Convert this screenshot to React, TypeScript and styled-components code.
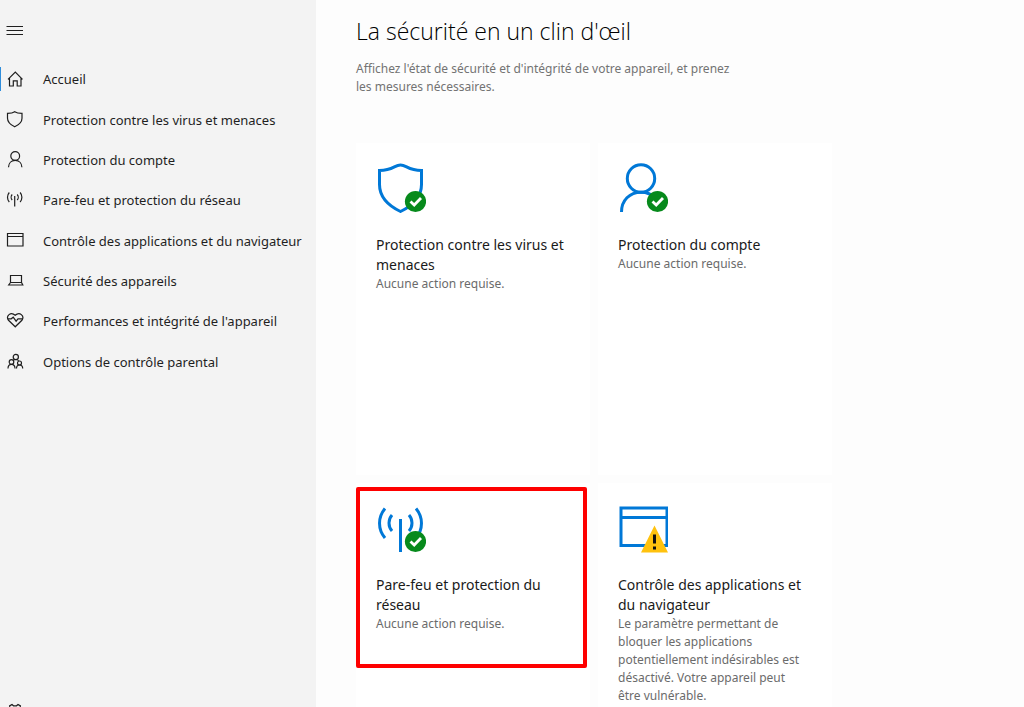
import React from "react";
import styled, { createGlobalStyle } from "styled-components";

const GlobalStyle = createGlobalStyle`
  *, *::before, *::after { box-sizing: border-box; }
  body {
    margin: 0;
    background: #fdfdfd;
    color: #1a1a1a;
    font-family: "Segoe UI", "Noto Sans", "Open Sans", sans-serif;
  }
`;

const Shell = styled.div`
  display: grid;
  grid-template-columns: minmax(316px, 24%) 1fr;
  height: 100vh;
  overflow: hidden;
`;

const Sidebar = styled.aside`
  display: flex;
  flex-direction: column;
  background: #f3f3f3;
  overflow: hidden;
`;

const IconButton = styled.button`
  display: flex;
  align-items: center;
  flex: none;
  height: 59px;
  padding: 0 6px;
  border: 0;
  background: none;
  color: #1f1f1f;
`;

const Nav = styled.nav`
  display: grid;
  grid-auto-rows: 1fr;
  min-height: 323px;
`;

const NavLink = styled.a<{ $active?: boolean }>`
  display: flex;
  align-items: center;
  gap: 19px;
  padding-left: 6px;
  color: #1f1f1f;
  font-size: 13px;
  line-height: 20px;
  text-decoration: none;
  white-space: nowrap;
  background: ${({ $active }) =>
    $active ? "linear-gradient(#2f8ddb, #2f8ddb) left center / 1px 24px no-repeat" : "none"};
`;

const SidebarFooter = styled.div`
  margin-top: auto;
  margin-bottom: -34px;
`;

const Main = styled.main`
  padding: 15px 40px 40px;
  overflow: hidden;
`;

const PageTitle = styled.h1`
  margin: 0;
  color: #000;
  font-family: "Segoe UI", "Open Sans", sans-serif;
  font-size: 23px;
  font-weight: 300;
  line-height: 32px;
`;

const Intro = styled.p`
  max-width: 388px;
  margin: 13px 0 47px;
  color: #737373;
  font-size: 12px;
  line-height: 18px;
`;

const Cards = styled.div`
  display: grid;
  grid-template-columns: repeat(auto-fill, 234px);
  grid-auto-rows: minmax(332px, auto);
  gap: 8px;
  max-width: 480px;
`;

const Card = styled.a`
  position: relative;
  display: block;
  padding: 20px 24px 20px 20px;
  background: #fff;
  color: inherit;
  text-decoration: none;
`;

const Highlight = styled.span`
  position: absolute;
  top: 4px;
  right: 3px;
  left: 0;
  height: 181px;
  border: 4px solid #fe0000;
  border-radius: 2px;
`;

const CardTitle = styled.h2`
  margin: 22px 0 0;
  color: #1a1a1a;
  font-size: 14px;
  font-weight: 400;
  line-height: 20px;
`;

const CardText = styled.p`
  margin: 0;
  color: #6b6b6b;
  font-size: 12px;
  line-height: 18px;
`;

const SmallSvg = styled.svg`
  display: block;
  flex: none;
  width: 18px;
  height: 18px;
  fill: none;
  stroke: currentColor;
  stroke-width: 1.2;
`;

const LargeSvg = styled.svg`
  display: block;
  width: 50px;
  height: 50px;
  fill: none;
  stroke: #0078d7;
  stroke-width: 3;
`;

const CheckBadge = () => (
  <g stroke="none">
    <circle cx="39.5" cy="38.5" r="10.6" fill="#078a1c" />
    <path d="M34.5 38.5l3.7 3.5 6.8-7" fill="none" stroke="#fff" strokeWidth="2.8" />
  </g>
);

const MenuIcon = () => (
  <SmallSvg viewBox="0 0 18 18" aria-hidden="true">
    <path d="M.5 5.500h16.500M.5 9.500h16.500M.5 13.500h16.500" />
  </SmallSvg>
);

const navIcons = {
  home: <path d="M2 9.300L9.300 2l7.200 7.300M3.500 8v8h3.800v-5.200h3.900V16H15V8" />,
  shield: (
    <path d="M8.700 .7C7 2 4.500 2.400 1.500 2.400V7.200c0 4.200 3 6.500 7.200 8.600C13 13.700 16 11.400 16 7.200V2.400c-3 0-5.500-.4-7.300-1.700z" />
  ),
  person: (
    <>
      <circle cx="9.200" cy="5" r="4.400" />
      <path d="M2.500 16.300c.1-4 2.800-6.900 6.700-6.900s6.600 2.900 6.700 6.900" />
    </>
  ),
  antenna: (
    <path d="M8.700 5v10.500M6.200 3.500c-1.400 1.500-1.400 4 0 5.500M11.200 3.500c1.400 1.500 1.400 4 0 5.500M3.300 1.500c-2.400 2.700-2.400 6.800 0 9.500M14.100 1.500c2.400 2.700 2.400 6.800 0 9.500" />
  ),
  browser: <path d="M1.500 1.500h15.500v12.500H1.500zM1.500 4.500h15.500" />,
  laptop: <path d="M4.500 3.500h11v7h-11zM4.500 10.500L2.700 13h14.100l-1.300-2.500" />,
  heart: (
    <>
      <path d="M9.200 14.800L2.500 8.300C-.5 4 4.700-.8 9.200 3.300c4.500-4.100 9.700.7 6.700 5z" />
      <path d="M1.800 6.800h3.400l2-1.600 2.900 4 1.900-2.400h4.800" />
    </>
  ),
  family: (
    <>
      <circle cx="9.800" cy="4" r="2.600" />
      <circle cx="5.500" cy="9" r="2.300" />
      <circle cx="13.500" cy="10" r="2" />
      <path d="M2 15.500c0-2.700 1.300-4.200 3.500-4.200S9 12.800 9 15.500M10.500 15.500c0-2.200 1-3.500 3-3.500s3.200 1.300 3.200 3.500M7 7.500c.7-.7 1.600-1 2.700-1 1.400 0 2.500.6 3.200 1.700" />
    </>
  ),
};

type NavIconName = keyof typeof navIcons;

const navItems: { icon: NavIconName; label: string }[] = [
  { icon: "home", label: "Accueil" },
  { icon: "shield", label: "Protection contre les virus et menaces" },
  { icon: "person", label: "Protection du compte" },
  { icon: "antenna", label: "Pare-feu et protection du réseau" },
  { icon: "browser", label: "Contrôle des applications et du navigateur" },
  { icon: "laptop", label: "Sécurité des appareils" },
  { icon: "heart", label: "Performances et intégrité de l'appareil" },
  { icon: "family", label: "Options de contrôle parental" },
];

const ShieldArt = () => (
  <LargeSvg viewBox="0 0 50 50" aria-hidden="true">
    <path d="M24.500 2C18.500 2 17 7.500 3.500 7.500v14C3.500 34 12 42.500 24.500 48.500 37 42.500 45.500 34 45.500 21.500v-14C32 7.500 30.500 2 24.500 2z" />
    <CheckBadge />
  </LargeSvg>
);

const PersonArt = () => (
  <LargeSvg viewBox="0 0 50 50" aria-hidden="true">
    <circle cx="23" cy="15.500" r="13.700" />
    <path d="M3.500 49C3.500 37.500 11.500 29.200 23 29.200c6 0 11 2.300 14.500 6" />
    <CheckBadge />
  </LargeSvg>
);

const AntennaArt = () => (
  <LargeSvg viewBox="0 0 50 50" aria-hidden="true">
    <path d="M24.500 16v33M16 12c-4 4.500-4 11.500 0 16M33 12c4 4.500 4 11.500 0 16M9 5.500c-7.300 8.700-7.300 20.800 0 29.500M40 5.500c7.300 8.700 7.300 20.800 0 29.500" />
    <CheckBadge />
  </LargeSvg>
);

const BrowserArt = () => (
  <LargeSvg viewBox="0 0 50 50" aria-hidden="true">
    <path d="M3 5h46v37.500H3zM3 14.500h46" />
    <path d="M36.500 22.500L50 49.500H23z" fill="#ffc20e" stroke="none" />
    <path d="M36.500 31.500v9M36.500 43.500v3" stroke="#111" />
  </LargeSvg>
);

const cards = [
  {
    Art: ShieldArt,
    title: "Protection contre les virus et menaces",
    text: "Aucune action requise.",
    highlighted: false,
  },
  {
    Art: PersonArt,
    title: "Protection du compte",
    text: "Aucune action requise.",
    highlighted: false,
  },
  {
    Art: AntennaArt,
    title: "Pare-feu et protection du réseau",
    text: "Aucune action requise.",
    highlighted: true,
  },
  {
    Art: BrowserArt,
    title: "Contrôle des applications et du navigateur",
    text: "Le paramètre permettant de bloquer les applications potentiellement indésirables est désactivé. Votre appareil peut être vulnérable.",
    highlighted: false,
  },
];

export default function App() {
  return (
    <>
      <GlobalStyle />
      <Shell>
        <Sidebar>
          <IconButton type="button" aria-label="Menu">
            <MenuIcon />
          </IconButton>
          <Nav>
            {navItems.map(({ icon, label }, index) => (
              <NavLink key={icon} href={`#${icon}`} $active={index === 0}>
                <SmallSvg viewBox="0 0 18 18" aria-hidden="true">
                  {navIcons[icon]}
                </SmallSvg>
                {label}
              </NavLink>
            ))}
          </Nav>
          <SidebarFooter>
            <IconButton type="button" aria-label="Paramètres">
              <SmallSvg viewBox="0 0 18 18" aria-hidden="true">
                <circle cx="9" cy="9" r="2.800" />
                <path d="M6 1.500l1.500 1.300h3L12 1.500l2.400 1.400-.4 2 1.200 2 1.900.7v2.800l-1.900.7-1.200 2 .4 2-2.400 1.400-1.500-1.300h-3L6 16.500l-2.400-1.400.4-2-1.200-2-1.900-.7V7.600l1.900-.7 1.200-2-.4-2z" />
              </SmallSvg>
            </IconButton>
          </SidebarFooter>
        </Sidebar>
        <Main>
          <PageTitle>La sécurité en un clin d'œil</PageTitle>
          <Intro>
            Affichez l'état de sécurité et d'intégrité de votre appareil, et prenez les mesures
            nécessaires.
          </Intro>
          <Cards>
            {cards.map(({ Art, title, text, highlighted }) => (
              <Card key={title} href="#details">
                <Art />
                <CardTitle>{title}</CardTitle>
                <CardText>{text}</CardText>
                {highlighted && <Highlight />}
              </Card>
            ))}
          </Cards>
        </Main>
      </Shell>
    </>
  );
}
